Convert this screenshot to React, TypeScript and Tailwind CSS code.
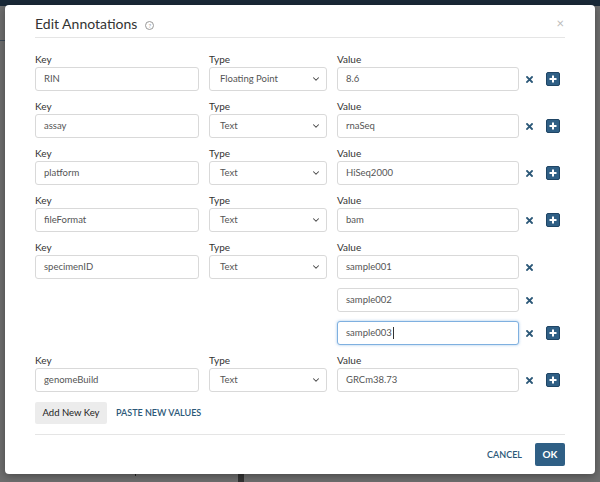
import { ChevronDown } from "lucide-react";

type Row = { key: string; type: string; values: string[] };

const ROWS: Row[] = [
  { key: "RIN", type: "Floating Point", values: ["8.6"] },
  { key: "assay", type: "Text", values: ["rnaSeq"] },
  { key: "platform", type: "Text", values: ["HiSeq2000"] },
  { key: "fileFormat", type: "Text", values: ["bam"] },
  { key: "specimenID", type: "Text", values: ["sample001", "sample002", "sample003"] },
  { key: "genomeBuild", type: "Text", values: ["GRCm38.73"] },
];

function RemoveIcon() {
  return (
    <svg width="7" height="7" viewBox="0 0 7 7" className="text-[#2c5878]">
      <path d="M1 1 L6 6 M6 1 L1 6" stroke="currentColor" strokeWidth="1.8" strokeLinecap="square" />
    </svg>
  );
}

function AddButton() {
  return (
    <span className="grid h-[14px] w-[14px] place-items-center rounded-[2px] border border-[#1f4565] bg-[#2f5f85]">
      <svg width="8" height="8" viewBox="0 0 8 8">
        <path d="M4 0.5 V7.5 M0.5 4 H7.5" stroke="#fff" strokeWidth="2" />
      </svg>
    </span>
  );
}

function Field({ label, children }: { label?: string; children: React.ReactNode }) {
  return (
    <div className="flex flex-col">
      {label && <div className="mb-[3px] h-[10px] text-[10px] leading-[10px] text-[#333]">{label}</div>}
      {children}
    </div>
  );
}

function TextBox({ value, focused, caret }: { value: string; focused?: boolean; caret?: boolean }) {
  return (
    <div
      className={
        "flex h-[24px] items-center rounded-[3px] border bg-white px-[8px] text-[9.5px] text-[#555] " +
        (focused ? "border-[#7fb0e0] shadow-[0_0_3px_rgba(102,160,220,0.6)]" : "border-[#d9d9d9]")
      }
    >
      {value}
      {caret && <span className="ml-[1px] inline-block h-[12px] w-px bg-[#333]" />}
    </div>
  );
}

function Select({ value }: { value: string }) {
  return (
    <div className="flex h-[24px] items-center justify-between rounded-[3px] border border-[#d9d9d9] bg-white pl-[10px] pr-[5px] text-[9.5px] text-[#555]">
      <span>{value}</span>
      <ChevronDown size={10} strokeWidth={2.5} className="text-[#444]" />
    </div>
  );
}

function AnnotationRow({ row }: { row: Row }) {
  const last = row.values.length - 1;
  return (
    <div className="flex flex-col gap-[9px]">
      {row.values.map((v, i) => (
        <div key={i} className="flex items-end">
          <div className="w-[164px]">{i === 0 && <Field label="Key"><TextBox value={row.key} /></Field>}</div>
          <div className="ml-[10px] w-[118px]">{i === 0 && <Field label="Type"><Select value={row.type} /></Field>}</div>
          <div className="ml-[10px] w-[182px]">
            <Field label={i === 0 ? "Value" : undefined}>
              <TextBox value={v} focused={row.key === "specimenID" && i === 2} caret={row.key === "specimenID" && i === 2} />
            </Field>
          </div>
          <div className="flex h-[24px] w-[14px] items-center justify-end">
            <RemoveIcon />
          </div>
          <div className="ml-[13px] flex h-[24px] w-[14px] items-center">{i === last && <AddButton />}</div>
        </div>
      ))}
    </div>
  );
}

export default function App() {
  return (
    <div
      className="relative h-[482px] w-[600px] overflow-hidden bg-[#6e6e6e]"
      style={{ fontFamily: "Lato, 'Noto Sans', sans-serif" }}
    >
      {/* dimmed page behind */}
      <div className="h-[6px] bg-[#1a2938]" />
      <div className="absolute left-0 top-[40px] h-px w-[8px] bg-[#3c4a58]" />
      <div className="absolute bottom-[6px] left-[135px] h-[10px] w-px bg-[#222]" />
      <div className="absolute bottom-0 left-[238px] h-[12px] w-[6px] bg-[#333]" />

      {/* modal */}
      <div className="absolute left-[5px] top-[5px] flex h-[469px] w-[590px] flex-col rounded-[4px] bg-white px-[30px] shadow-[0_2px_8px_rgba(0,0,0,0.35)]">
        <div className="flex h-[33px] items-end justify-between border-b border-[#e5e5e5] pb-[3px]">
          <div className="flex items-center">
            <span className="text-[14px] font-normal leading-[20px] text-[#333]">Edit Annotations</span>
            <span className="ml-[8px] mt-[3px] grid h-[9px] w-[9px] place-items-center rounded-full border border-[#999] text-[6px] leading-none text-[#999]">
              ?
            </span>
          </div>
          <span className="mb-[4px] mr-[1px] text-[13px] leading-none text-[#bbb]">×</span>
        </div>

        <div className="mt-[16px] flex flex-col gap-[10px]">
          {ROWS.map((r) => (
            <AnnotationRow key={r.key} row={r} />
          ))}
        </div>

        <div className="mt-[10px] flex items-center">
          <button className="h-[22px] w-[72px] rounded-[2px] bg-[#ececec] text-[9.5px] text-[#222]">Add New Key</button>
          <span className="ml-[9px] text-[9px] font-semibold text-[#2c5878]">PASTE NEW VALUES</span>
        </div>

        <div className="mt-[10px] border-t border-[#e5e5e5]" />

        <div className="mt-[8px] flex items-center justify-end">
          <span className="text-[9px] font-semibold text-[#2c5878]">CANCEL</span>
          <button className="ml-[13px] h-[23px] w-[30px] rounded-[2px] bg-[#2f5f85] text-[10px] font-bold text-white">OK</button>
        </div>
      </div>
    </div>
  );
}
